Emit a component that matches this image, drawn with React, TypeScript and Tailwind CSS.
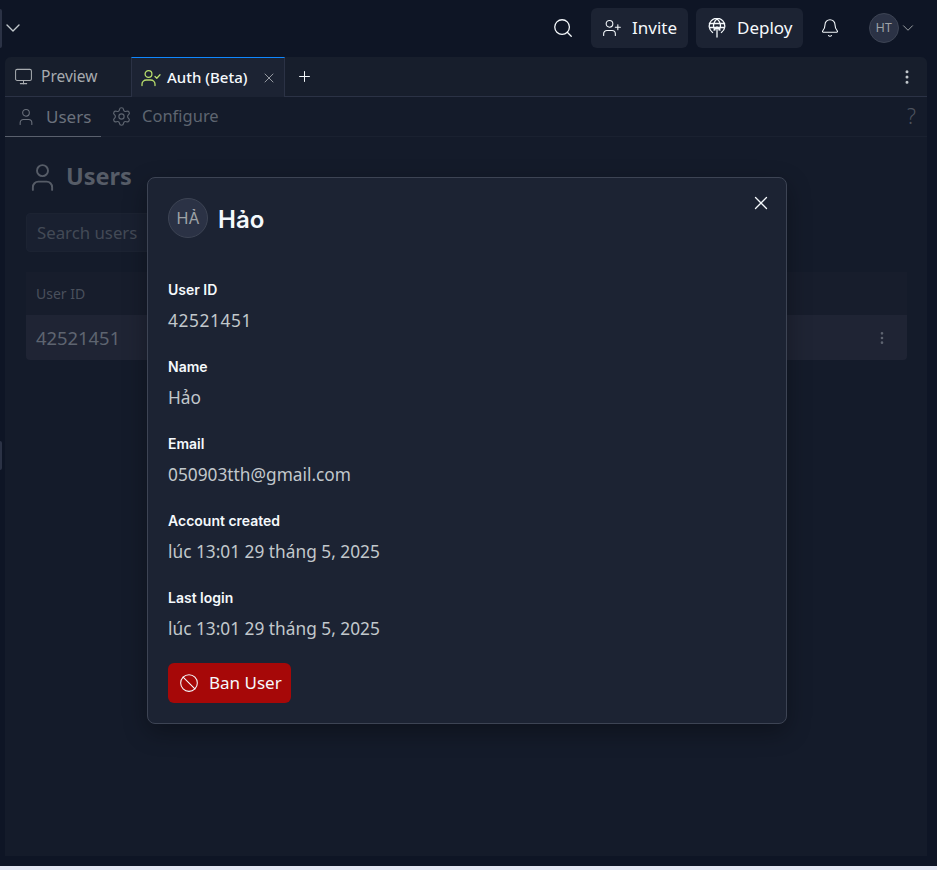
import { Ban, Bell, ChevronDown, Monitor, MoreVertical, Plus, Search, Settings, User, UserPlus, X } from "lucide-react";

const plex = "font-['Noto_Sans','Open_Sans',sans-serif]";

function UserCheckIcon() {
  return (
    <svg width="20" height="18" viewBox="0 0 20 18" fill="none" stroke="#b7dc6b" strokeWidth="1.3" strokeLinecap="round" strokeLinejoin="round">
      <circle cx="7.5" cy="5" r="3.4" />
      <path d="M1 16.5v-1.2c0-2.6 2-4.3 4.4-4.3h4.2c2.4 0 4.4 1.7 4.4 4.3v1.2" />
      <path d="M14 7.5l1.8 1.8L19 5.8" />
    </svg>
  );
}

function DeployIcon() {
  return (
    <svg width="18" height="20" viewBox="0 0 18 20" fill="none" stroke="#f5f9fc" strokeWidth="1.3" strokeLinecap="round" strokeLinejoin="round">
      <path d="M4.6 14.5A7.8 7.8 0 1 1 13.4 14.5" />
      <path d="M9 1C6.4 3 5.2 6 5.6 9.5L7 12M9 1c2.6 2 3.8 5 3.4 8.5L11 12M1.4 5.5h15.2M1.6 9.5h14.8" />
      <path d="M9 19V9M6 12l3-3 3 3" />
    </svg>
  );
}

function Field({ label, value, wide }: { label: string; value: string; wide?: boolean }) {
  return (
    <div className="flex flex-col">
      <div className="h-[19px] text-[14px] leading-[19px] font-semibold text-[#f5f9fc] font-['Inter',sans-serif]">{label}</div>
      <div className={`mt-[10px] h-[24px] text-[17.3px] leading-[24px] text-[#c2c8cc] ${plex} ${wide ? "tracking-[0.6px]" : ""}`}>{value}</div>
    </div>
  );
}

export default function App() {
  return (
    <div className={`relative h-[870px] w-[937px] overflow-hidden bg-[#0e1525] ${plex}`}>
      {/* top bar */}
      <header className="flex h-[57px] items-center pb-[1px]">
        <div className="h-[39px] w-[2px] rounded-r-sm bg-[#2b3245]" />
        <ChevronDown className="ml-[-1px] h-[24px] w-[24px] text-[#c2c8cc]" strokeWidth={1.4} />
        <div className="ml-auto flex items-center">
          <Search className="h-[22px] w-[22px] text-[#f5f9fc]" strokeWidth={1.4} />
          <button className="ml-[17px] flex h-[40px] w-[97px] items-center rounded-md bg-[#1c2333] pl-[11px] text-[17px] text-[#f5f9fc]">
            <UserPlus className="h-[20px] w-[20px]" strokeWidth={1.3} />
            <span className="ml-[10px]">Invite</span>
          </button>
          <button className="ml-[8px] flex h-[40px] w-[107px] items-center rounded-md bg-[#1c2333] pl-[12px] text-[17px] text-[#f5f9fc]">
            <DeployIcon />
            <span className="ml-[11px]">Deploy</span>
          </button>
          <Bell className="ml-[17px] h-[20px] w-[20px] text-[#f5f9fc]" strokeWidth={1.3} />
          <div className="ml-[29px] flex h-[30px] w-[30px] items-center justify-center rounded-full border border-[#3d4454] bg-[#2b3245] text-[12px] text-[#9da2a6] font-['Inter',sans-serif]">HT</div>
          <ChevronDown className="mr-[20px] h-[18px] w-[18px] text-[#9da2a6]" strokeWidth={1.3} />
        </div>
      </header>

      <div className="relative ml-[5px] flex h-[799px] w-[922px] flex-col overflow-hidden rounded-t-md bg-[#141b2a]">
        {/* tab strip */}
        <div className="flex h-[40px] items-stretch border-b border-[#2b3245] bg-[#171e2c]">
          <div className="flex w-[126px] items-center pl-[9px] text-[15.5px] text-[#a7abaf]">
            <Monitor className="h-[19px] w-[19px]" strokeWidth={1.3} />
            <span className="ml-[8px]">Preview</span>
          </div>
          <div className="mb-[-1px] flex w-[154px] items-center border-x border-t border-[#2b3245] border-t-[#0f87ff] bg-[#1c2333] pl-[9px] text-[15px] font-medium text-[#f5f9fc]">
            <UserCheckIcon />
            <span className="ml-[6px]">Auth (Beta)</span>
            <X className="ml-[14px] h-[16px] w-[16px] text-[#b4b8bc]" strokeWidth={1.2} />
          </div>
          <div className="flex w-[38px] items-center justify-center text-[#f5f9fc]">
            <Plus className="h-[17px] w-[17px]" strokeWidth={1.4} />
          </div>
          <div className="ml-auto flex w-[41px] items-center justify-center text-[#c2c8cc]">
            <MoreVertical className="h-[18px] w-[18px]" strokeWidth={2} />
          </div>
        </div>

        {/* sub tabs */}
        <div className="flex h-[40px] items-stretch border-b border-[#1a2130] text-[17px] text-[#5e6570]">
          <div className="mb-[-1px] flex w-[96px] items-center border-b border-[#5a606d] pl-[11px]">
            <User className="h-[20px] w-[20px] text-[#6b717c]" strokeWidth={1.3} />
            <span className="ml-[10px] text-[#6b717c]">Users</span>
          </div>
          <div className="flex items-center pl-[10px]">
            <Settings className="h-[21px] w-[21px]" strokeWidth={1.3} />
            <span className="ml-[10px] text-[16.5px]">Configure</span>
          </div>
          <span className="ml-auto mr-[11px] self-center text-[21px] font-light text-[#4d535e]">?</span>
        </div>

        {/* page content, dimmed by the overlay */}
        <div className="flex flex-col px-[21px]">
          <div className="mt-[22px] flex h-[36px] items-center text-[#565c67]">
            <User className="h-[33px] w-[33px] text-[#565c67]" strokeWidth={1.4} />
            <span className="ml-[7px] text-[23.5px] font-bold">Users</span>
          </div>
          <div className="mt-[18px] flex h-[39px] w-[300px] items-center rounded border border-[#1c2332] bg-[#192030] pl-[10px] text-[16.8px] text-[#434a56]">Search users</div>
          <div className="mt-[20px] w-[881px]">
            <div className="flex h-[43px] items-center bg-[#171d2c] pl-[10px] text-[14px] text-[#4a505c]">User ID</div>
            <div className="flex h-[45px] items-center justify-between rounded-b-sm bg-[#1f2434] pl-[10px] pr-[17px] text-[18.4px] text-[#5e6470]">
              42521451
              <MoreVertical className="h-[16px] w-[16px] text-[#5e6470]" strokeWidth={2} />
            </div>
          </div>
        </div>
      </div>

      {/* scroll handle on the left edge */}
      <div className="absolute left-0 top-[441px] h-[29px] w-[2px] rounded-r-sm bg-[#2b3245]" />
      {/* light strip at the window bottom */}
      <div className="absolute bottom-0 left-0 h-[4px] w-full bg-[#e4e8f4]" />

      {/* modal */}
      <div className="absolute left-[147px] top-[177px] h-[547px] w-[640px] rounded-lg border border-[#3d4454] bg-[#1c2333] px-[20px] pt-[20px] shadow-[0_8px_24px_rgba(2,2,3,0.32)]">
        <button className="absolute right-[14px] top-[14px] text-[#f5f9fc]">
          <X className="h-[22px] w-[22px]" strokeWidth={1.4} />
        </button>
        <div className="flex h-[40px] items-center">
          <div className="flex h-[40px] w-[40px] items-center justify-center rounded-full border border-[#3d4454] bg-[#2b3245] text-[16px] text-[#9da2a6] font-['Inter',sans-serif]">HẢ</div>
          <h2 className="ml-[10px] mt-[3px] text-[24px] font-semibold text-[#f5f9fc] font-['Inter',sans-serif]">Hảo</h2>
        </div>
        <div className="mt-[42px] flex flex-col gap-[24px]">
          <Field label="User ID" value="42521451" wide />
          <Field label="Name" value="Hảo" />
          <Field label="Email" value="050903tth@gmail.com" />
          <Field label="Account created" value="lúc 13:01 29 tháng 5, 2025" />
          <Field label="Last login" value="lúc 13:01 29 tháng 5, 2025" />
        </div>
        <button className="mt-[22px] flex h-[40px] w-[123px] items-center rounded-md bg-[#a60808] pl-[11px] text-[17px] text-[#f5f9fc]">
          <Ban className="h-[20px] w-[20px]" strokeWidth={1.3} />
          <span className="ml-[10px]">Ban User</span>
        </button>
      </div>
    </div>
  );
}
